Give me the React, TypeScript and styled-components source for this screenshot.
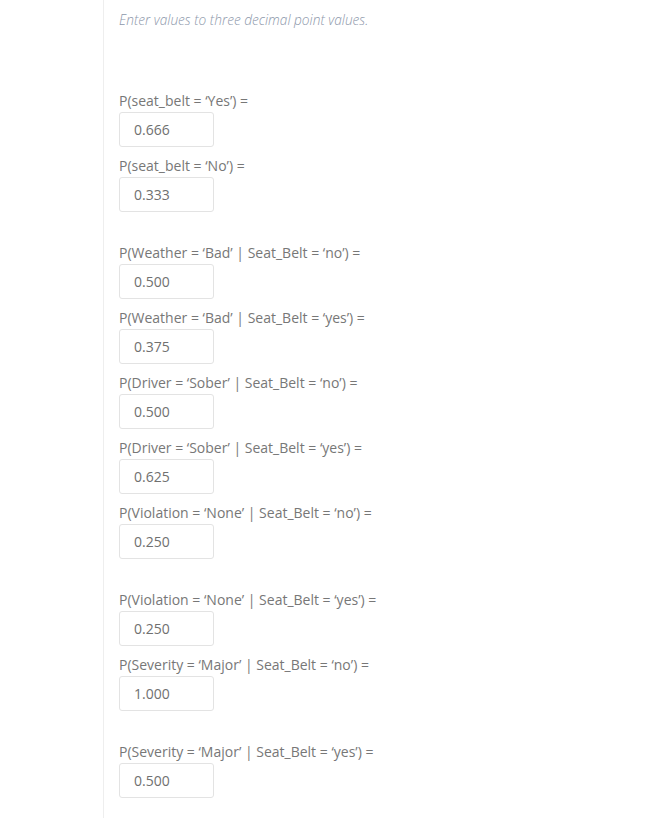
import { createGlobalStyle } from 'styled-components';
import styled from 'styled-components';

type Item = {
  label: string;
  value: string;
  gapAfter?: boolean;
};

const items: Item[] = [
  { label: 'P(seat_belt = ‘Yes’) =', value: '0.666' },
  { label: 'P(seat_belt = ‘No’) =', value: '0.333', gapAfter: true },
  { label: 'P(Weather = ‘Bad’ | Seat_Belt = ‘no’) =', value: '0.500' },
  { label: 'P(Weather = ‘Bad’ | Seat_Belt = ‘yes’) =', value: '0.375' },
  { label: 'P(Driver = ‘Sober’ | Seat_Belt = ‘no’) =', value: '0.500' },
  { label: 'P(Driver = ‘Sober’ | Seat_Belt = ‘yes’) =', value: '0.625' },
  { label: 'P(Violation = ‘None’ | Seat_Belt = ‘no’) =', value: '0.250', gapAfter: true },
  { label: 'P(Violation = ‘None’ | Seat_Belt = ‘yes’) =', value: '0.250' },
  { label: 'P(Severity = ‘Major’ | Seat_Belt = ‘no’) =', value: '1.000', gapAfter: true },
  { label: 'P(Severity = ‘Major’ | Seat_Belt = ‘yes’) =', value: '0.500' },
];

const GlobalStyle = createGlobalStyle`
  body {
    margin: 0;
    background: #fff;
    font-family: 'Open Sans', 'Liberation Sans', sans-serif;
  }
`;

export default function App() {
  return (
    <>
      <GlobalStyle />
      <Page>
        <Column>
          <Hint>Enter values to three decimal point values.</Hint>
          <Form>
            {items.map((item, i) => (
              <Field key={i} $gapAfter={!!item.gapAfter}>
                <Label>{item.label}</Label>
                <ValueInput defaultValue={item.value} />
              </Field>
            ))}
          </Form>
        </Column>
      </Page>
    </>
  );
}

const Page = styled.div`
  width: 659px;
  height: 818px;
  overflow: hidden;
  padding-left: 103px;
  box-sizing: border-box;
`;

const Column = styled.div`
  height: 100%;
  border-left: 1px solid #eeeeee;
  padding-left: 15px;
`;

const Hint = styled.p`
  margin: 0;
  padding-top: 10px;
  font-size: 13.7px;
  line-height: 20px;
  font-style: italic;
  font-weight: 300;
  color: #8d97aa;
`;

const Form = styled.div`
  padding-top: 61px;
  display: flex;
  flex-direction: column;
`;

const Field = styled.div<{ $gapAfter: boolean }>`
  display: flex;
  flex-direction: column;
  align-items: flex-start;
  margin-bottom: ${({ $gapAfter }) => ($gapAfter ? '31px' : '9px')};
`;

const Label = styled.label`
  font-size: 14px;
  line-height: 20px;
  color: #777777;
  margin-bottom: 1px;
`;

const ValueInput = styled.input`
  box-sizing: border-box;
  width: 95px;
  height: 35px;
  padding: 0 14px;
  border: 1px solid #e3e3e3;
  border-radius: 3px;
  font-family: 'Open Sans', 'Liberation Sans', sans-serif;
  font-size: 14px;
  color: #707070;
  background: #fff;
  outline: none;
`;
